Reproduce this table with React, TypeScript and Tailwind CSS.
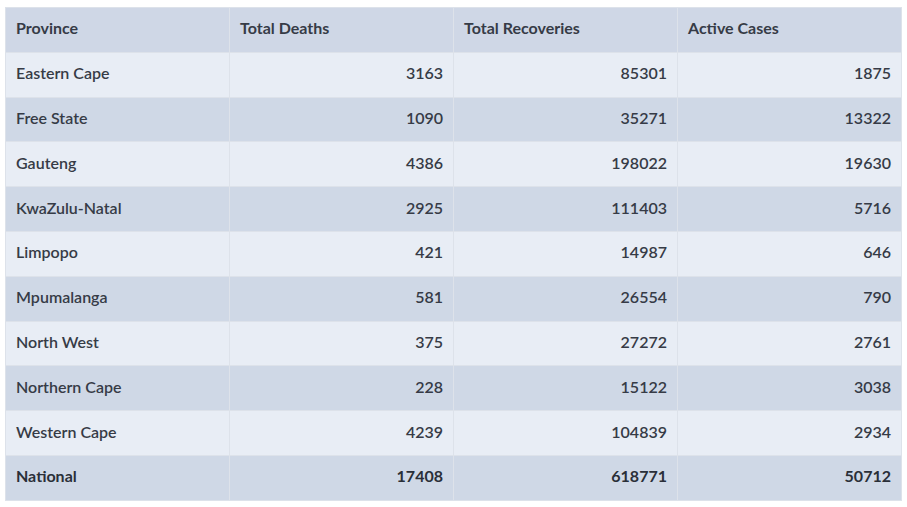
import React from "react";

const ROWS: Array<[string, number, number, number]> = [
  ["Eastern Cape", 3163, 85301, 1875],
  ["Free State", 1090, 35271, 13322],
  ["Gauteng", 4386, 198022, 19630],
  ["KwaZulu-Natal", 2925, 111403, 5716],
  ["Limpopo", 421, 14987, 646],
  ["Mpumalanga", 581, 26554, 790],
  ["North West", 375, 27272, 2761],
  ["Northern Cape", 228, 15122, 3038],
  ["Western Cape", 4239, 104839, 2934],
];

const cell = "border border-[#dde2ea]";

export default function App() {
  return (
    <div className="w-[907px] h-[507px] bg-white pt-[7px] pl-[5px] font-['Lato','Liberation_Sans',sans-serif] text-[16px] text-[#363b46]">
      <table className="w-[897px] table-fixed border-collapse">
        <thead>
          <tr className="h-[44.8px] bg-[#cfd7e6]">
            <th className={`text-left font-bold px-[10px] pb-[3px] ${cell}`}>Province</th>
            <th className={`text-left font-bold px-[10px] pb-[3px] ${cell}`}>Total Deaths</th>
            <th className={`text-left font-bold px-[10px] pb-[3px] ${cell}`}>Total Recoveries</th>
            <th className={`text-left font-bold px-[10px] pb-[3px] ${cell}`}>Active Cases</th>
          </tr>
        </thead>
        <tbody className="font-semibold">
          {ROWS.map(([name, d, r, a], i) => (
            <tr key={name} className={i % 2 === 0 ? "h-[44.8px] bg-[#e8edf5]" : "h-[44.8px] bg-[#cfd8e6]"}>
              <td className={`px-[10px] pb-[3px] ${cell}`}>{name}</td>
              <td className={`px-[10px] pb-[3px] text-right tabular-nums ${cell}`}>{d}</td>
              <td className={`px-[10px] pb-[3px] text-right tabular-nums ${cell}`}>{r}</td>
              <td className={`px-[10px] pb-[3px] text-right tabular-nums ${cell}`}>{a}</td>
            </tr>
          ))}
          <tr className="h-[44.8px] bg-[#cfd8e6] font-bold text-[#2a2f38]">
            <td className={`px-[10px] pb-[3px] ${cell}`}>National</td>
            <td className={`px-[10px] pb-[3px] text-right tabular-nums ${cell}`}>17408</td>
            <td className={`px-[10px] pb-[3px] text-right tabular-nums ${cell}`}>618771</td>
            <td className={`px-[10px] pb-[3px] text-right tabular-nums ${cell}`}>50712</td>
          </tr>
        </tbody>
      </table>
    </div>
  );
}
